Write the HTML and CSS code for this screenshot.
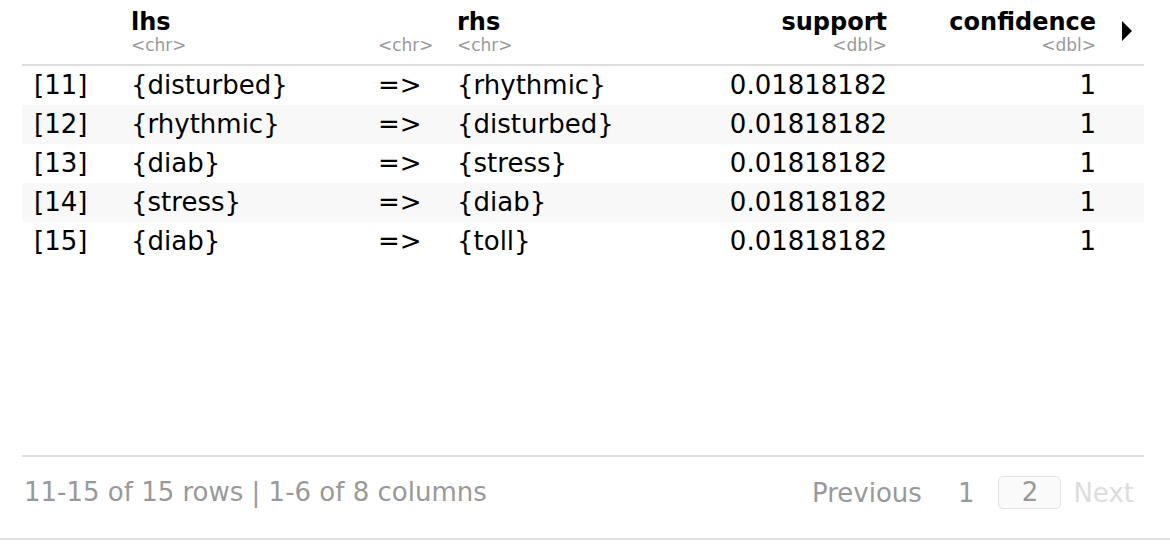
FILE: index.html
```html
<!DOCTYPE html>
<html>
<head>
<meta charset="utf-8">
<link rel="stylesheet" href="styles.css">
</head>
<body>
<div class="pagedtable">
  <table class="grid">
    <colgroup>
      <col class="c-idx">
      <col class="c-lhs">
      <col class="c-arrow">
      <col class="c-rhs">
      <col class="c-sup">
      <col class="c-conf">
      <col class="c-more">
    </colgroup>
    <thead>
      <tr>
        <th class="left"></th>
        <th class="left"><div class="name">lhs</div><div class="type">&lt;chr&gt;</div></th>
        <th class="left"><div class="name">&nbsp;</div><div class="type">&lt;chr&gt;</div></th>
        <th class="left"><div class="name">rhs</div><div class="type">&lt;chr&gt;</div></th>
        <th class="right"><div class="name">support</div><div class="type">&lt;dbl&gt;</div></th>
        <th class="right"><div class="name">confidence</div><div class="type">&lt;dbl&gt;</div></th>
        <th class="more"><span class="tri"></span></th>
      </tr>
    </thead>
    <tbody>
      <tr><td>[11]</td><td>{disturbed}</td><td>=&gt;</td><td>{rhythmic}</td><td class="right">0.01818182</td><td class="right">1</td><td></td></tr>
      <tr class="odd"><td>[12]</td><td>{rhythmic}</td><td>=&gt;</td><td>{disturbed}</td><td class="right">0.01818182</td><td class="right">1</td><td></td></tr>
      <tr><td>[13]</td><td>{diab}</td><td>=&gt;</td><td>{stress}</td><td class="right">0.01818182</td><td class="right">1</td><td></td></tr>
      <tr class="odd"><td>[14]</td><td>{stress}</td><td>=&gt;</td><td>{diab}</td><td class="right">0.01818182</td><td class="right">1</td><td></td></tr>
      <tr><td>[15]</td><td>{diab}</td><td>=&gt;</td><td>{toll}</td><td class="right">0.01818182</td><td class="right">1</td><td></td></tr>
    </tbody>
  </table>
  <div class="footer">
    <div class="info">11-15 of 15 rows | 1-6 of 8 columns</div>
    <div class="pager">
      <span class="prev">Previous</span>
      <span class="num">1</span>
      <span class="num current">2</span>
      <span class="next">Next</span>
    </div>
  </div>
</div>
</body>
</html>
```
FILE: styles.css
```css
html, body {
  margin: 0;
  padding: 0;
  background: #ffffff;
}
body {
  font-family: "DejaVu Sans", "Liberation Sans", sans-serif;
  color: #000;
  width: 1170px;
  height: 544px;
  overflow: hidden;
}
.pagedtable {
  height: 538px;
  border-bottom: 2px solid #e2e2e2;
  display: flex;
  flex-direction: column;
}
.grid {
  margin: 0 26px 0 22px;
  width: 1122px;
  table-layout: fixed;
  border-collapse: collapse;
  font-size: 26px;
}
.c-idx { width: 97px; }
.c-lhs { width: 247px; }
.c-arrow { width: 79px; }
.c-rhs { width: 255px; }
.c-sup { width: 199px; }
.c-conf { width: 209px; }
.c-more { width: 36px; }
th {
  font-weight: bold;
  font-size: 24px;
  padding: 8px 12px 10px 12px;
  vertical-align: bottom;
  border-bottom: 2px solid #dddddd;
  white-space: nowrap;
}
th.left { text-align: left; }
th.right { text-align: right; }
.name {
  line-height: 28px;
}
.type {
  font-weight: normal;
  font-size: 17px;
  color: #999999;
  line-height: 18px;
}
th.more {
  padding: 0;
  vertical-align: top;
  text-align: left;
}
.tri {
  display: block;
  width: 0;
  height: 0;
  margin: 21px 0 0 14px;
  border-top: 10px solid transparent;
  border-bottom: 10px solid transparent;
  border-left: 10px solid #000;
}
td {
  height: 39px;
  padding: 0 12px;
  white-space: nowrap;
  line-height: 39px;
}
td.right { text-align: right; }
tr.odd td { background: #f8f8f8; }
.footer {
  margin: auto 26px 0 22px;
  border-top: 2px solid #dddddd;
  height: 83px;
  box-sizing: border-box;
  padding-top: 19px;
  display: flex;
  align-items: flex-start;
  justify-content: space-between;
  font-size: 26px;
  line-height: 32px;
  color: #999999;
}
.info {
  padding-left: 2px;
}
.pager {
  display: flex;
  align-items: center;
  padding-right: 10px;
}
.prev { margin-right: 36px; }
.num { margin-right: 24px; }
.current {
  width: 63px;
  height: 33px;
  box-sizing: border-box;
  border: 1px solid #e2e2e2;
  border-radius: 5px;
  background: #fafafa;
  text-align: center;
  line-height: 31px;
  margin-right: 12px;
  color: #999;
}
.next { color: #dddddd; }
```
